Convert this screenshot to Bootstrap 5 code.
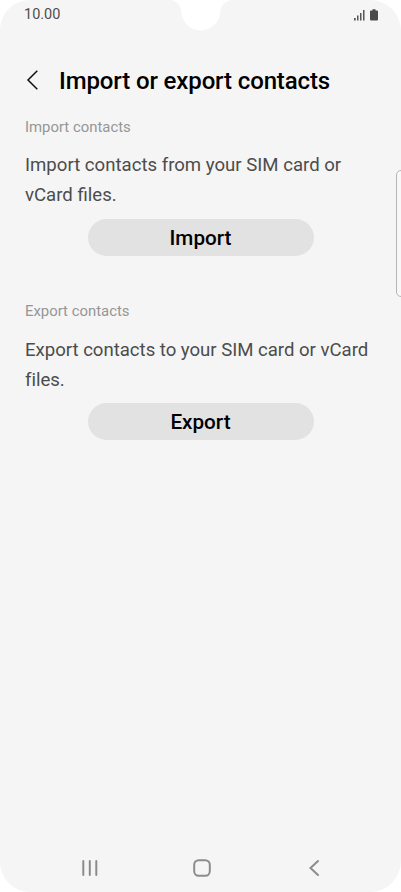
<!DOCTYPE html>
<html lang="en">
<head>
<meta charset="utf-8">
<meta name="viewport" content="width=device-width, initial-scale=1">
<title>Import or export contacts</title>
<link href="https://cdn.jsdelivr.net/npm/bootstrap@5.3.0/dist/css/bootstrap.min.css" rel="stylesheet">
<style>
body{background:#fff;font-family:Roboto,"Liberation Sans",sans-serif}
.phone{width:401px;height:892px;background:#f5f5f5;border-radius:30px 31px 31px 30px}
.notch{left:172px}
.edge-handle{top:170px;right:-6px;width:11px;height:127px;border:1px solid #b5b5b5;border-radius:5px;background:#f8f8f8}
.status{height:29px;padding:0 22px 0 24px;font-size:14.5px;color:#4d4d4d}
.title-row{height:50px;margin-top:27px;padding-left:25px}
.title-row h1{font-size:24px;font-weight:500;color:#000;margin-left:20px;line-height:30px;letter-spacing:-.13px}
.group{padding:0 25px}
.group-import{margin-top:11px}
.group-export{margin-top:45px}
.group h2{font-size:14.9px;font-weight:400;line-height:20px;color:#969696}
.group p{font-size:18.6px;line-height:30px;color:#4c4c4c;padding-top:13px;margin-right:-10px}
.group-export p{padding-top:14px;margin-bottom:-1px;letter-spacing:-.02px}
.pill{width:226px;height:37px;margin-top:9px;background:#e2e2e2;font-size:20.7px;font-weight:500;line-height:39px;color:#000}
.nav-keys{height:48px;padding:0 81px}
.home-key{margin-right:4px}
</style>
</head>
<body>
<main class="phone position-relative overflow-hidden d-flex flex-column">
  <svg class="notch position-absolute top-0" width="58" height="31" aria-hidden="true"><path d="M-1 0C5 1 8.500 5 9.300 11A19.200 19.200 0 0 0 48.300 11C49.500 5 53 1 59 0Z" fill="#fff"/></svg>
  <div class="edge-handle position-absolute"></div>
  <header class="status d-flex justify-content-between align-items-center">
    <span>10.00</span>
    <svg width="26" height="14" viewBox="0 0 26 14" fill="#555" aria-hidden="true"><path d="M1 10h1.700v2.500H1zM4 7.500h1.500v5H4zM7 5h1.500v7.500H7zM10 2h1.500v10.500H10z"/><path d="M19.500 1.300h3V2.500H24q1 0 1 1v8q0 1-1 1h-6q-1 0-1-1v-8q0-1 1-1h1.500z" fill="#4a4a4a"/></svg>
  </header>
  <div class="title-row d-flex align-items-center">
    <svg width="14" height="22" viewBox="0 0 14 22" fill="none" stroke="#111" stroke-width="1.500" aria-hidden="true"><path d="M12.300.700 3 10l9.300 9.300"/></svg>
    <h1 class="mb-0">Import or export contacts</h1>
  </div>
  <section class="group group-import">
    <h2 class="mb-0">Import contacts</h2>
    <p class="mb-0">Import contacts from your SIM card or<br>vCard files.</p>
    <button class="pill btn rounded-pill border-0 p-0 d-block mx-auto" type="button">Import</button>
  </section>
  <section class="group group-export">
    <h2 class="mb-0">Export contacts</h2>
    <p>Export contacts to your SIM card or vCard<br>files.</p>
    <button class="pill btn rounded-pill border-0 p-0 d-block mx-auto" type="button">Export</button>
  </section>
  <footer class="nav-keys d-flex justify-content-between align-items-center mt-auto">
    <svg width="18" height="18" viewBox="0 0 18 18" fill="none" stroke="#8c8c8c" stroke-width="2" stroke-linecap="round" aria-hidden="true"><path d="M2.300 2v14M8.800 2v14M15.300 2v14"/></svg>
    <svg class="home-key" width="18" height="18" viewBox="0 0 18 18" fill="none" stroke="#8c8c8c" stroke-width="2" aria-hidden="true"><rect x="1.200" y="1.200" width="15.600" height="15.600" rx="4.500"/></svg>
    <svg width="12" height="18" viewBox="0 0 12 18" fill="none" stroke="#8c8c8c" stroke-width="2" stroke-linecap="round" aria-hidden="true"><path d="M10 2 2.500 9 10 16"/></svg>
  </footer>
</main>
<script src="https://cdn.jsdelivr.net/npm/bootstrap@5.3.0/dist/js/bootstrap.bundle.min.js"></script>
</body>
</html>
